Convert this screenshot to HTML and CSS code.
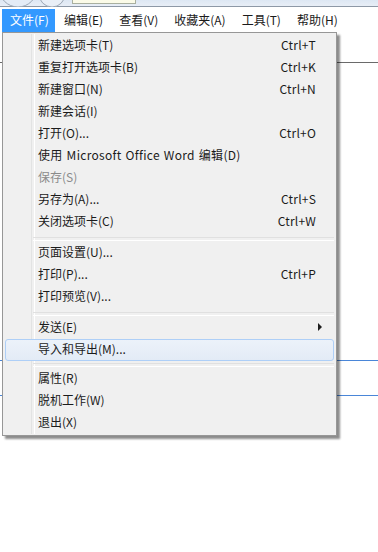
FILE: index.html
```html
<!DOCTYPE html>
<html lang="zh-CN">
<head>
  <meta charset="UTF-8" />
  <title>文件菜单</title>
  <link rel="stylesheet" href="styles.css">
</head>
<body>
  <div class="chrome">
    <svg class="nav-btns" width="70" height="7" viewBox="0 0 70 7">
      <circle cx="18" cy="-12" r="19" fill="#e4ecf6" stroke="#9aa6b4" stroke-width="1"/>
      <circle cx="52" cy="-6" r="13" fill="#e9eff7" stroke="#9aa6b4" stroke-width="1"/>
    </svg>
    <div class="address"></div>
  </div>

  <div class="menubar">
    <span class="top-item active">文件(F)</span>
    <span class="top-item">编辑(E)</span>
    <span class="top-item">查看(V)</span>
    <span class="top-item">收藏夹(A)</span>
    <span class="top-item">工具(T)</span>
    <span class="top-item">帮助(H)</span>
  </div>

  <div class="page">
    <div class="rule grey"></div>
    <div class="rule blue first"></div>
    <div class="rule blue second"></div>
  </div>

  <div class="menu">
    <div class="item"><span>新建选项卡(T)</span><span class="key">Ctrl+T</span></div>
    <div class="item"><span>重复打开选项卡(B)</span><span class="key">Ctrl+K</span></div>
    <div class="item"><span>新建窗口(N)</span><span class="key">Ctrl+N</span></div>
    <div class="item"><span>新建会话(I)</span></div>
    <div class="item"><span>打开(O)...</span><span class="key">Ctrl+O</span></div>
    <div class="item"><span class="wide">使用 Microsoft Office Word 编辑(D)</span></div>
    <div class="item disabled"><span>保存(S)</span></div>
    <div class="item"><span>另存为(A)...</span><span class="key">Ctrl+S</span></div>
    <div class="item"><span>关闭选项卡(C)</span><span class="key">Ctrl+W</span></div>
    <div class="sep"></div>
    <div class="item"><span>页面设置(U)...</span></div>
    <div class="item"><span>打印(P)...</span><span class="key">Ctrl+P</span></div>
    <div class="item"><span>打印预览(V)...</span></div>
    <div class="sep"></div>
    <div class="item sub"><span>发送(E)</span><span class="arrow"></span></div>
    <div class="item hover"><span>导入和导出(M)...</span></div>
    <div class="sep short"></div>
    <div class="item"><span>属性(R)</span></div>
    <div class="item"><span>脱机工作(W)</span></div>
    <div class="item"><span>退出(X)</span></div>
  </div>
</body>
</html>
```

FILE: styles.css
```css
*{margin:0;padding:0;box-sizing:border-box}
body{width:378px;height:552px;background:#fff;font-family:"Noto Sans CJK SC","Noto Sans",sans-serif;font-size:12px;color:#1b1b1b;position:relative;overflow:hidden}
.chrome{height:7px;background:linear-gradient(#dde7f3,#e8eef6);border-bottom:1px solid #8d98a6;display:flex;align-items:flex-start}
.nav-btns{display:block}
.address{margin-left:2px;width:64px;height:4px;background:#fbfbe8;border:1px solid #a9b0a0;border-top:none}
.menubar{display:flex;height:25px;padding:2px 0 0 2px;background:#fff}
.top-item{display:flex;align-items:center;height:23px;padding:0 8px 1px;line-height:1;white-space:nowrap}
.top-item:nth-child(2){margin-left:1px}
.top-item.active{background:#3399ff;color:#fff;width:53px}
.page{position:relative;height:500px}
.rule{height:1px;background:#6a6a6a;margin-top:30px}
.rule.blue{background:#4a86d8}
.rule.first{margin-top:297px}
.rule.second{margin-top:34px}
.menu{position:absolute;left:2px;top:32px;width:335px;height:404px;background:#f0f0f0;border:1px solid #979797;padding:2px;box-shadow:3px 3px 2px rgba(0,0,0,.45)}
.menu::before{content:"";position:absolute;left:28px;top:1px;bottom:1px;width:2px;border-left:1px solid #e2e3e3;border-right:1px solid #fff}
.item{position:relative;display:flex;justify-content:space-between;align-items:center;height:22px;padding:0 17px 2px 32px;border:1px solid transparent;border-radius:3px;line-height:1}
.item.disabled{color:#8b8b8b}
.item.hover{background:linear-gradient(#ecf2fa,#e3ebf6);border-color:#aecff7}
.wide{letter-spacing:.3px;word-spacing:1px}
.key{letter-spacing:0.2px}
.arrow{width:0;height:0;border-top:4px solid transparent;border-bottom:4px solid transparent;border-left:4px solid #1e1e1e;margin-right:-6px}
.sep{position:relative;height:9px;margin-left:28px}
.sep::after{content:"";position:absolute;left:0;right:0;top:4px;height:2px;border-top:1px solid #e0e0e0;border-bottom:1px solid #fff}
.sep.short{height:7px}
.sep.short::after{top:2px}
```
